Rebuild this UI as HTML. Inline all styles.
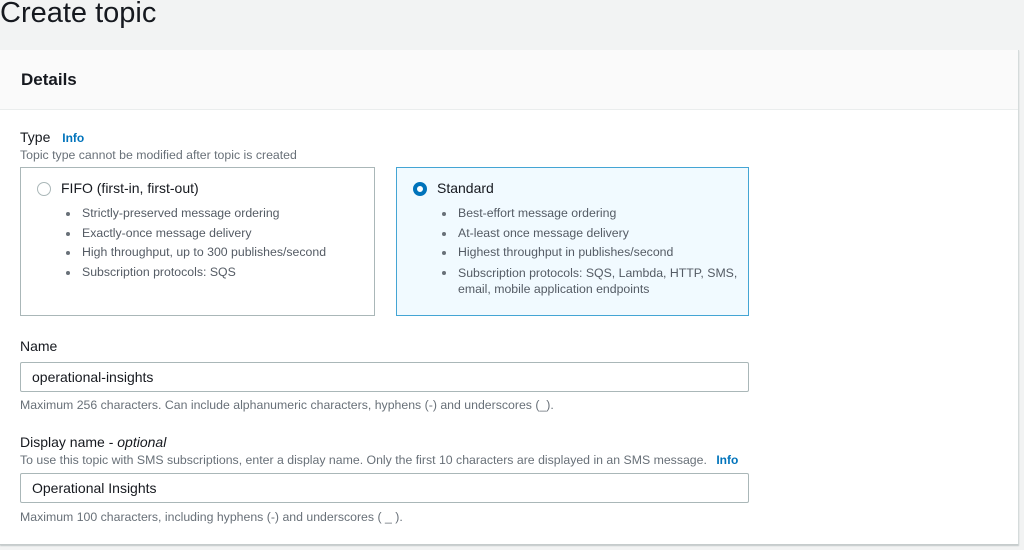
<!DOCTYPE html>
<html><head><style>
*{box-sizing:border-box;margin:0;padding:0}
body{width:1024px;height:550px;background:#f2f3f3;font-family:"Liberation Sans",Arial,sans-serif;color:#16191f;position:relative;overflow:hidden}
.abs{position:absolute;white-space:nowrap}
h1{position:absolute;left:0;top:-3px;font-size:29px;font-weight:400;color:#16191f}
.panel{position:absolute;left:0;top:50px;width:1019px;height:495px;background:#fff;border-right:1px solid #d5dbdb;border-bottom:1px solid #c6cccc;box-shadow:0 1px 1px rgba(0,28,36,.2)}
.phead{position:absolute;left:0;top:0;width:100%;height:60px;background:#fafafa;border-bottom:1px solid #eaeded}
.lbl{font-size:14px;color:#16191f}
.sub{font-size:12.3px;color:#687078}
.info{color:#0073bb;font-weight:700;font-size:12px}
.card{position:absolute;top:167px;height:149px;border:1px solid #aab7b8;background:#fff}
.card.sel{border-color:#44a5d4;background:#f1faff}
.radio{position:absolute;left:16px;top:14px;width:14px;height:14px;border-radius:50%;border:1px solid #aab7b8;background:#fff}
.sel .radio{border:4px solid #0073bb}
.ct{position:absolute;left:40px;top:12px;font-size:14px}
.card ul{position:absolute;left:61px;top:36px;list-style:none;font-size:12.3px;color:#545b64;line-height:19.6px}
.card li{position:relative}
.card li:before{content:"";position:absolute;left:-16px;top:8px;width:4px;height:4px;border-radius:50%;background:#687078}
.inp{position:absolute;left:20px;width:729px;height:30px;border:1px solid #aab7b8;border-radius:2px;font-size:14px;padding:6px 11px;color:#16191f}
</style></head><body>
<h1>Create topic</h1>
<div class="panel"><div class="phead"></div></div>
<div class="abs" style="left:21px;top:70px;font-size:17px;font-weight:700">Details</div>
<div class="abs lbl" style="left:20px;top:129px">Type <span class="info" style="margin-left:8px">Info</span></div>
<div class="abs sub" style="left:20px;top:148px">Topic type cannot be modified after topic is created</div>
<div class="card" style="left:20px;width:355px"><div class="radio"></div><div class="ct">FIFO (first-in, first-out)</div>
<ul><li>Strictly-preserved message ordering</li><li>Exactly-once message delivery</li><li>High throughput, up to 300 publishes/second</li><li>Subscription protocols: SQS</li></ul></div>
<div class="card sel" style="left:396px;width:353px"><div class="radio"></div><div class="ct">Standard</div>
<ul><li>Best-effort message ordering</li><li>At-least once message delivery</li><li>Highest throughput in publishes/second</li><li style="line-height:16px;padding-top:2px">Subscription protocols: SQS, Lambda, HTTP, SMS,<br>email, mobile application endpoints</li></ul></div>
<div class="abs lbl" style="left:20px;top:338px">Name</div>
<div class="inp" style="top:362px">operational-insights</div>
<div class="abs sub" style="left:20px;top:398px">Maximum 256 characters. Can include alphanumeric characters, hyphens (-) and underscores (_).</div>
<div class="abs lbl" style="left:20px;top:434px">Display name - <i>optional</i></div>
<div class="abs sub" style="left:20px;top:453px">To use this topic with SMS subscriptions, enter a display name. Only the first 10 characters are displayed in an SMS message. <span class="info" style="margin-left:6px">Info</span></div>
<div class="inp" style="top:473px">Operational Insights</div>
<div class="abs sub" style="left:20px;top:510px">Maximum 100 characters, including hyphens (-) and underscores ( _ ).</div>
</body></html>
